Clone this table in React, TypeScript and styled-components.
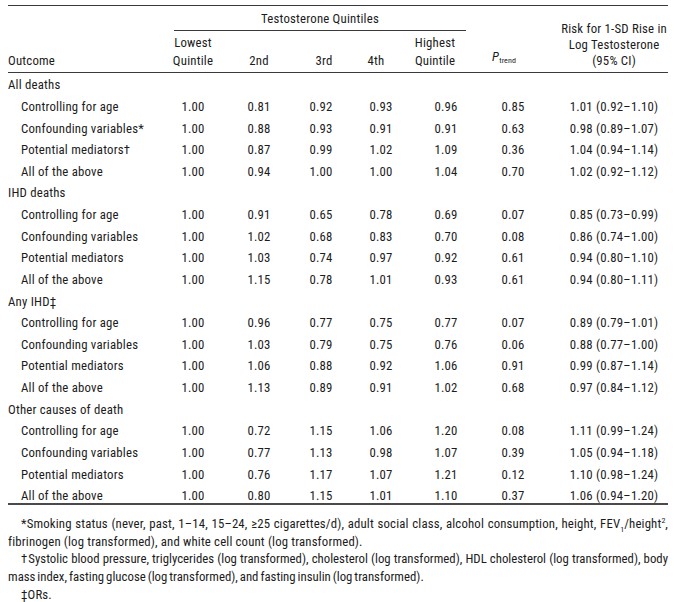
import React from 'react';
import styled, { createGlobalStyle } from 'styled-components';

const GlobalStyle = createGlobalStyle`
  html, body {
    margin: 0;
    padding: 0;
    background: #fff;
  }
  body {
    font-family: "Roboto Condensed", Roboto, "Liberation Sans", Arial, sans-serif;
    font-stretch: 75%;
    color: #1c1c1c;
  }
`;

// ---------------- layout --------------------------------------

const Page = styled.div`
  width: 660px;
  padding: 5px 9px 0 8px;
`;

const Table = styled.table`
  width: 660px;
  border-collapse: collapse;
  table-layout: fixed;
  font-size: 12.8px;
  letter-spacing: 0.2px;
  border-top: 1px solid #3a3a3a;
  border-bottom: 2px solid #4a4a4a;
`;

const Col = styled.col<{ $w: number }>`
  width: ${p => p.$w}px;
`;

// ---------------- header --------------------------------------

const Head = styled.thead`
  border-bottom: 1px solid #3a3a3a;
`;

const HeadRow = styled.tr<{ $h: number }>`
  height: ${p => p.$h}px;
`;

const HeadCell = styled.th<{ $left?: boolean; $padL?: number; $padR?: number }>`
  font-weight: normal;
  text-align: ${p => (p.$left ? 'left' : 'center')};
  vertical-align: bottom;
  line-height: 18px;
  padding: 0 ${p => p.$padR ?? 0}px 2px ${p => p.$padL ?? 0}px;
  white-space: nowrap;
`;

const RiskHead = styled(HeadCell)`
  line-height: 16px;
  padding-bottom: 3px;
`;

const SpanCell = styled.th`
  font-weight: normal;
  padding: 0 14px;
  vertical-align: top;
`;

const Spanner = styled.div`
  padding: 4px 0 3px;
  line-height: 17px;
  text-align: center;
  border-bottom: 1px solid #3a3a3a;
`;

const PItalic = styled.span`
  font-style: italic;
`;

const Sub = styled.sub`
  font-size: 8px;
  letter-spacing: 0.1px;
  vertical-align: -2px;
`;

// ---------------- body --------------------------------------

const Row = styled.tr`
  td {
    padding: 3.32px 0;
    line-height: 15px;
    white-space: nowrap;
  }
  &:first-child td {
    padding-top: 4.8px;
  }
  &:last-child td {
    padding-bottom: 0;
  }
`;

const LabelCell = styled.td<{ $indent?: boolean }>`
  text-align: left;
  padding-left: ${p => (p.$indent ? 13 : 0)}px !important;
`;

const NumCell = styled.td<{ $padL?: number }>`
  text-align: center;
  padding-left: ${p => p.$padL ?? 0}px !important;
`;

// ---------------- notes --------------------------------------

const Notes = styled.div`
  margin-top: 10px;
  font-size: 12.8px;
  line-height: 17.6px;
`;

const Note = styled.p<{ $tight?: boolean }>`
  margin: 0;
  text-align: justify;
  text-indent: 13px;
  letter-spacing: ${p => (p.$tight ? 0 : 0.15)}px;
  word-spacing: ${p => (p.$tight ? -1 : 0)}px;

  sub, sup {
    font-size: 8px;
    line-height: 0;
    letter-spacing: 0;
  }
`;

// ---------------- data --------------------------------------

type Line = { label: string; vals: string[]; p: string; risk: string };
type Group = { title: string; lines: Line[] };

const groups: Group[] = [
  {
    title: 'All deaths',
    lines: [
      { label: 'Controlling for age', vals: ['1.00', '0.81', '0.92', '0.93', '0.96'], p: '0.85', risk: '1.01 (0.92–1.10)' },
      { label: 'Confounding variables*', vals: ['1.00', '0.88', '0.93', '0.91', '0.91'], p: '0.63', risk: '0.98 (0.89–1.07)' },
      { label: 'Potential mediators†', vals: ['1.00', '0.87', '0.99', '1.02', '1.09'], p: '0.36', risk: '1.04 (0.94–1.14)' },
      { label: 'All of the above', vals: ['1.00', '0.94', '1.00', '1.00', '1.04'], p: '0.70', risk: '1.02 (0.92–1.12)' },
    ],
  },
  {
    title: 'IHD deaths',
    lines: [
      { label: 'Controlling for age', vals: ['1.00', '0.91', '0.65', '0.78', '0.69'], p: '0.07', risk: '0.85 (0.73–0.99)' },
      { label: 'Confounding variables', vals: ['1.00', '1.02', '0.68', '0.83', '0.70'], p: '0.08', risk: '0.86 (0.74–1.00)' },
      { label: 'Potential mediators', vals: ['1.00', '1.03', '0.74', '0.97', '0.92'], p: '0.61', risk: '0.94 (0.80–1.10)' },
      { label: 'All of the above', vals: ['1.00', '1.15', '0.78', '1.01', '0.93'], p: '0.61', risk: '0.94 (0.80–1.11)' },
    ],
  },
  {
    title: 'Any IHD‡',
    lines: [
      { label: 'Controlling for age', vals: ['1.00', '0.96', '0.77', '0.75', '0.77'], p: '0.07', risk: '0.89 (0.79–1.01)' },
      { label: 'Confounding variables', vals: ['1.00', '1.03', '0.79', '0.75', '0.76'], p: '0.06', risk: '0.88 (0.77–1.00)' },
      { label: 'Potential mediators', vals: ['1.00', '1.06', '0.88', '0.92', '1.06'], p: '0.91', risk: '0.99 (0.87–1.14)' },
      { label: 'All of the above', vals: ['1.00', '1.13', '0.89', '0.91', '1.02'], p: '0.68', risk: '0.97 (0.84–1.12)' },
    ],
  },
  {
    title: 'Other causes of death',
    lines: [
      { label: 'Controlling for age', vals: ['1.00', '0.72', '1.15', '1.06', '1.20'], p: '0.08', risk: '1.11 (0.99–1.24)' },
      { label: 'Confounding variables', vals: ['1.00', '0.77', '1.13', '0.98', '1.07'], p: '0.39', risk: '1.05 (0.94–1.18)' },
      { label: 'Potential mediators', vals: ['1.00', '0.76', '1.17', '1.07', '1.21'], p: '0.12', risk: '1.10 (0.98–1.24)' },
      { label: 'All of the above', vals: ['1.00', '0.80', '1.15', '1.01', '1.10'], p: '0.37', risk: '1.06 (0.94–1.20)' },
    ],
  },
];

const widths = [152, 66, 66, 58, 62, 68, 66, 122];

export default function App() {
  return (
    <Page>
      <GlobalStyle />
      <Table>
        <colgroup>
          {widths.map((w, i) => (
            <Col key={i} $w={w} />
          ))}
        </colgroup>
        <Head>
          <HeadRow $h={25}>
            <HeadCell $left rowSpan={2}>Outcome</HeadCell>
            <SpanCell colSpan={5}>
              <Spanner>Testosterone Quintiles</Spanner>
            </SpanCell>
            <HeadCell rowSpan={2} $padR={18}>
              <PItalic>P</PItalic>
              <Sub>trend</Sub>
            </HeadCell>
            <RiskHead rowSpan={2} $padL={14}>
              Risk for 1-SD Rise in
              <br />
              Log Testosterone
              <br />
              (95% CI)
            </RiskHead>
          </HeadRow>
          <HeadRow $h={41}>
            <HeadCell>
              Lowest
              <br />
              Quintile
            </HeadCell>
            <HeadCell>2nd</HeadCell>
            <HeadCell $padL={6}>3rd</HeadCell>
            <HeadCell $padR={10}>4th</HeadCell>
            <HeadCell $padR={22}>
              Highest
              <br />
              Quintile
            </HeadCell>
          </HeadRow>
        </Head>
        <tbody>
          {groups.flatMap(g => [
            <Row key={g.title}>
              <LabelCell colSpan={8}>{g.title}</LabelCell>
            </Row>,
            ...g.lines.map(l => (
              <Row key={g.title + l.label}>
                <LabelCell $indent>{l.label}</LabelCell>
                {l.vals.map((v, i) => (
                  <NumCell key={i}>{v}</NumCell>
                ))}
                <NumCell>{l.p}</NumCell>
                <NumCell $padL={14}>{l.risk}</NumCell>
              </Row>
            )),
          ])}
        </tbody>
      </Table>
      <Notes>
        <Note>
          *Smoking status (never, past, 1–14, 15–24, ≥25 cigarettes/d), adult social class, alcohol consumption,
          height, FEV<sub>1</sub>/height<sup>2</sup>, fibrinogen (log transformed), and white cell count (log
          transformed).
        </Note>
        <Note $tight>
          †Systolic blood pressure, triglycerides (log transformed), cholesterol (log transformed), HDL cholesterol
          (log transformed), body mass index, fasting glucose (log transformed), and fasting insulin (log transformed).
        </Note>
        <Note>‡ORs.</Note>
      </Notes>
    </Page>
  );
}
